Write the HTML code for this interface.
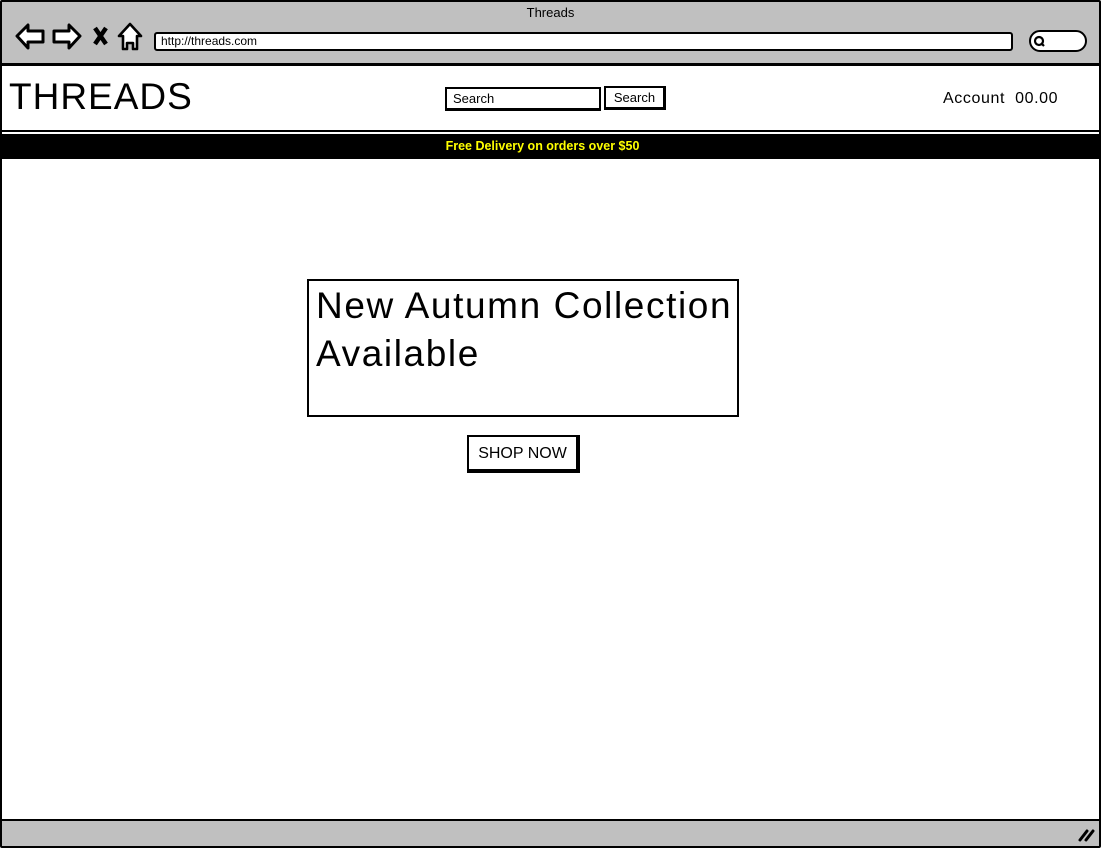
<!DOCTYPE html>
<html><head><style>
*{margin:0;padding:0;box-sizing:border-box}
body{width:1101px;height:848px;overflow:hidden;background:#fff;font-family:"Liberation Sans",sans-serif;position:relative}
.abs{position:absolute}
</style></head><body>
<div class="abs" style="left:0;top:0;width:1101px;height:848px;border:2px solid #000;border-radius:2px"></div>
<div class="abs" style="left:2px;top:2px;width:1097px;height:62px;background:#c0c0c0"></div>
<div class="abs" style="left:2px;top:63px;width:1097px;height:3px;background:#000"></div>
<div class="abs" style="left:0;top:5px;width:1101px;text-align:center;font-size:13px;color:#000">Threads</div>
<svg class="abs" style="left:14px;top:22px" width="132" height="30" viewBox="0 0 132 30">
<path d="M3 14 L14 3 L14 9 L29 9 L29 20 L14 20 L14 26 Z" fill="#fff" stroke="#000" stroke-width="3" stroke-linejoin="round"/>
<path d="M66 14 L55 3 L55 9 L40 9 L40 20 L55 20 L55 26 Z" fill="#fff" stroke="#000" stroke-width="3" stroke-linejoin="round"/>
<path d="M81 6 L92 22 M92 6 L81 22" stroke="#000" stroke-width="4.5"/>
<path d="M116 2 L105 14 L109 14 L109 27 L113 27 L113 21 L119 21 L119 27 L123 27 L123 14 L127 14 Z" fill="#fff" stroke="#000" stroke-width="2.6" stroke-linejoin="round"/>
</svg>
<div class="abs" style="left:154px;top:32px;width:859px;height:19px;background:#fff;border:2px solid #000;border-radius:3px;font-size:12px;padding-left:5px;line-height:15px">http://threads.com</div>
<div class="abs" style="left:1029px;top:30px;width:58px;height:22px;background:#fff;border:2px solid #000;border-radius:11px"></div>
<svg class="abs" style="left:1033px;top:35px" width="14" height="14"><circle cx="6" cy="6" r="4" fill="none" stroke="#000" stroke-width="2.2"/><path d="M8 8 L11 11" stroke="#000" stroke-width="2.2"/></svg>
<div class="abs" style="left:9px;top:77px;font-size:37px;line-height:40px;letter-spacing:1px">THREADS</div>
<div class="abs" style="left:445px;top:87px;width:156px;height:24px;border:2px solid #000;border-bottom-width:3px;font-size:13px;padding-left:6px;line-height:19px">Search</div>
<div class="abs" style="left:604px;top:86px;width:62px;height:24px;border:2px solid #000;border-right-width:3px;border-bottom-width:3px;font-size:13px;text-align:center;line-height:19px">Search</div>
<div class="abs" style="left:943px;top:90px;font-size:16px;letter-spacing:0.6px">Account&nbsp; 00.00</div>
<div class="abs" style="left:2px;top:130px;width:1097px;height:2px;background:#000"></div>
<div class="abs" style="left:2px;top:134px;width:1097px;height:25px;background:#000;color:#ff0;font-size:12.5px;font-weight:bold;text-align:center;line-height:25px;padding-right:16px">Free Delivery on orders over $50</div>
<div class="abs" style="left:307px;top:279px;width:432px;height:138px;border:2px solid #000"></div>
<div class="abs" style="left:316px;top:282px;font-size:37px;line-height:48px;letter-spacing:1.6px">New Autumn Collection<br>Available</div>
<div class="abs" style="left:467px;top:435px;width:113px;height:38px;border:2px solid #000;border-right-width:4px;border-bottom-width:4px;font-size:16px;text-align:center;line-height:34px">SHOP NOW</div>
<div class="abs" style="left:2px;top:819px;width:1097px;height:2px;background:#000"></div>
<div class="abs" style="left:2px;top:821px;width:1097px;height:25px;background:#c0c0c0"></div>
<svg class="abs" style="left:1078px;top:827px" width="18" height="16"><path d="M2 13 L9 4 M8 13 L15 4" stroke="#000" stroke-width="3" stroke-linecap="round"/></svg>
</body></html>
